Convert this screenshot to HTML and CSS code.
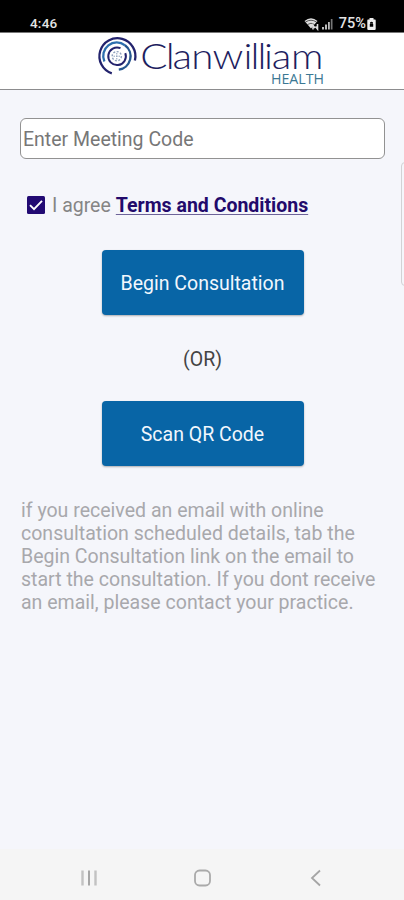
FILE: index.html
```html
<!DOCTYPE html>
<html lang="en">
<head>
    <meta charset="UTF-8">
    <meta name="viewport" content="width=device-width, initial-scale=1.0">
    <title>Clanwilliam Health</title>
    <link rel="stylesheet" href="styles.css">
</head>
<body>
    <div class="status-bar">
        <span class="time">4:46</span>
        <div class="status-icons">
            <svg width="30" height="14" viewBox="0 0 30 14">
                <path d="M0.5 4 Q7 -1.5 13.5 4 L7 11.5 Z" fill="#ddd"/>
                <path d="M1.5 5 Q7 1.5 12.5 5 M3.5 7.5 Q7 5 10.5 7.5" fill="none" stroke="#000" stroke-width="0.6"/>
                <path d="M9 12.5 V8.5 L11 11 M13.5 7 V12 L11.5 9.5" fill="none" stroke="#ddd" stroke-width="1.6"/>
                <path d="M18 12.5 V10 H20 V12.5 Z M21 12.5 V7.5 H23 V12.5 Z M24 12.5 V5 H25.8 V12.5 Z" fill="#bbb"/>
                <path d="M26.8 12.5 V2 H28.5 V12.5 Z" fill="#777"/>
            </svg>
            <span class="battery">75%</span>
            <svg width="9" height="12" viewBox="0 0 9 12">
                <path d="M2.5 0 H6.5 V1.5 H8 Q8.7 1.5 8.7 2.5 V11 Q8.7 12 7.7 12 H1.3 Q0.3 12 0.3 11 V2.5 Q0.3 1.5 1 1.5 H2.5 Z" fill="#eee"/>
                <path d="M3 5.8 V4.5 Q4.5 3 6 4.5 V5.8 M2.8 6 H6.2 V8.8 H2.8 Z" fill="#000"/>
            </svg>
        </div>
    </div>

    <header class="header">
        <svg class="logo" width="232" height="54" viewBox="0 0 232 54">
            <!-- Swirl -->
            <g fill="none" stroke-width="2.3">
                <path d="M15.8 40.3 A18 18 0 1 1 38.9 27.5" stroke="#23236d"/>
                <path d="M8.4 28.5 A13.5 13.5 0 0 1 29 12.3" stroke="#2d6fae"/>
                <path d="M29 12.3 A13.5 13.5 0 0 1 22.8 36.6" stroke="#26578f"/>
                <path d="M24.5 15.2 A8.8 8.8 0 1 0 29.3 20.2" stroke="#23236d" stroke-width="2"/>
            </g>
            <circle cx="20.8" cy="23.2" r="4.6" fill="none" stroke="#8fa1bd" stroke-width="1.4" stroke-dasharray="2 1.5"/>
            <path d="M17.5 23.2 H24 M20.8 20 V26.5" stroke="#8fa1bd" stroke-width="1" stroke-dasharray="1.5 1"/>
            <text class="logo-name" transform="scale(1.12 1)" x="39.4 62.3 68.4 85 104 131.6 138 144.2 150 157 174.2" y="36">Clanwilliam</text>
            <text class="logo-sub" x="175" y="51" textLength="53" lengthAdjust="spacingAndGlyphs">HEALTH</text>
        </svg>
    </header>

    <main class="content">
        <input class="code-input" type="text" placeholder="Enter Meeting Code">

        <div class="agree">
            <svg class="checkbox" width="18" height="18" viewBox="0 0 18 18">
                <rect width="18" height="18" rx="1.5" fill="#220a73"/>
                <path d="M3 9.2 L7 13.2 L15 4.8" fill="none" stroke="#fff" stroke-width="1.9"/>
            </svg>
            <span class="agree-text">I agree</span>
            <a class="terms" href="#">Terms and Conditions</a>
        </div>

        <button class="btn">Begin Consultation</button>
        <p class="or">(OR)</p>
        <button class="btn">Scan QR Code</button>

        <p class="info">
            if you received an email with online<br>
            consultation scheduled details, tab the<br>
            Begin Consultation link on the email to<br>
            start the consultation. If you dont receive<br>
            an email, please contact your practice.
        </p>
        <div class="edge-handle"></div>
    </main>

    <nav class="nav-bar">
        <svg width="18" height="18" viewBox="0 0 18 18">
            <path d="M2.5 1.5 V16.5 M15.5 1.5 V16.5" stroke="#c2c2c2" stroke-width="2.4"/>
            <path d="M9 1.5 V16.5" stroke="#a5a5a5" stroke-width="2"/>
        </svg>
        <svg width="18" height="18" viewBox="0 0 18 18">
            <rect x="1" y="1.5" width="15" height="15" rx="4.5" fill="none" stroke="#aaa" stroke-width="1.8"/>
        </svg>
        <svg width="18" height="18" viewBox="0 0 18 18">
            <path d="M13 1.5 L5 9 L13 16.5" fill="none" stroke="#a5a5a5" stroke-width="1.8"/>
        </svg>
    </nav>
</body>
</html>
```

FILE: styles.css
```css
* {
    margin: 0;
    padding: 0;
    box-sizing: border-box;
}

body {
    font-family: Roboto, sans-serif;
    background-color: #f5f6fb;
    height: 900px;
    display: flex;
    flex-direction: column;
    overflow: hidden;
}

.status-bar {
    height: 33px;
    padding: 14px 28px 0 30px;
    background-color: #000;
    border-bottom: 1px solid #777;
    display: flex;
    justify-content: space-between;
    color: #e4e4e4;
}

.time,
.battery {
    font-size: 13.5px;
    font-weight: 500;
    line-height: 19px;
}

.time {
    letter-spacing: 0.2px;
}

.status-icons {
    display: flex;
    align-items: center;
    height: 19px;
}

.battery {
    margin: 0 1px 0 5px;
    font-size: 14.5px;
}

.header {
    height: 57px;
    background-color: #fff;
    border-bottom: 1px solid #8c8c8e;
    padding-left: 96px;
}

.logo {
    display: block;
}

.logo-name {
    font-family: Lato, sans-serif;
    font-size: 36px;
    font-weight: 300;
    fill: #1e1e60;
}

.logo-sub {
    font-family: "Open Sans", sans-serif;
    font-size: 14px;
    fill: #3b7894;
}

.content {
    flex: 1;
    position: relative;
    padding: 28px 19px 0 20px;
    display: flex;
    flex-direction: column;
    align-items: center;
}

.code-input {
    width: 365px;
    height: 41px;
    padding: 2px 2px 0;
    border: 1px solid #929292;
    border-radius: 6px;
    background-color: #fff;
    font-family: inherit;
    font-size: 19.5px;
}

.code-input::placeholder {
    color: #777;
}

.agree {
    align-self: flex-start;
    height: 24px;
    margin: 34px 0 0 7px;
    display: flex;
    align-items: center;
    font-size: 19.5px;
}

.agree-text {
    margin: 0 5px 0 7px;
    color: #858585;
}

.terms {
    color: #220a6b;
    font-weight: 700;
    text-decoration-color: #6d6399;
    text-decoration-thickness: 1px;
    text-underline-offset: 2px;
}

.agree + .btn {
    margin-top: 33px;
}

.btn {
    width: 202px;
    height: 65px;
    padding-top: 2px;
    flex-shrink: 0;
    border: none;
    border-radius: 4px;
    background-color: #0865a6;
    box-shadow: 0 1px 2px rgba(0, 0, 0, 0.3);
    color: #f2f7fd;
    font-family: inherit;
    font-size: 19.5px;
    cursor: pointer;
}

.or {
    height: 24px;
    margin: 33px 0 29px;
    font-size: 19.5px;
    line-height: 24px;
    color: #444;
}

.info {
    align-self: flex-start;
    margin: 34px 0 0 1px;
    font-size: 19.55px;
    line-height: 22.9px;
    color: #a8a8ac;
    white-space: nowrap;
}

/* Edge panel handle of the phone */
.edge-handle {
    position: absolute;
    top: 72px;
    right: -5px;
    width: 8px;
    height: 124px;
    border: 1px solid #d2d2d5;
    border-radius: 4px;
    background-color: #f5f6fb;
}

.nav-bar {
    height: 51px;
    padding: 6px 79px 0 80px;
    background-color: #f5f5f5;
    display: flex;
    align-items: center;
    justify-content: space-between;
}
```
